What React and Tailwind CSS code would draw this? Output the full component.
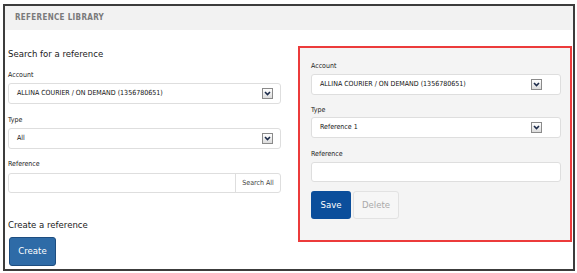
const font = { fontFamily: '"Liberation Sans Narrow", "DejaVu Sans Condensed", "Liberation Sans", sans-serif' };

function Chevron() {
  return (
    <span className="flex items-center justify-center w-[11px] h-[11px] border border-[#8a8a8a] bg-gradient-to-b from-white to-[#dcdcdc]">
      <svg width="7" height="5" viewBox="0 0 7 5">
        <path d="M1 1 L3.5 3.5 L6 1" fill="none" stroke="#1c2b4a" strokeWidth="1.6" />
      </svg>
    </span>
  );
}

function Select({ value, pr = 'pr-[7px]' }) {
  return (
    <div className={`flex items-center justify-between h-[21px] bg-white border border-[#dedede] rounded-[3px] pl-[8px] ${pr}`}>
      <span className="text-[7px] text-[#111]">{value}</span>
      <Chevron />
    </div>
  );
}

function Label({ children }) {
  return <div className="text-[7px] leading-[12px] text-[#222]">{children}</div>;
}

export default function App() {
  return (
    <div className="w-[577px] h-[273px] bg-white pt-[4px] pl-[3px]" style={font}>
      <div className="w-[572px] h-[267px] border-2 border-[#3c3c3c] bg-white">
        <div className="h-[24px] bg-[#f2f2f2] flex items-center pl-[10px]">
          <span className="text-[8px] font-bold tracking-[0.04em] text-[#7a7a7a]">REFERENCE LIBRARY</span>
        </div>

        <div className="flex items-start">
          {/* search column */}
          <div className="w-[273px] ml-[3px] flex flex-col">
            <div className="mt-[16px] text-[9.5px] leading-[16px] text-[#1a1a1a]">Search for a reference</div>
            <div className="mt-[7px]"><Label>Account</Label></div>
            <div className="mt-[2px]"><Select value="ALLINA COURIER / ON DEMAND (1356780651)" /></div>
            <div className="mt-[10px]"><Label>Type</Label></div>
            <div className="mt-[2px]"><Select value="All" /></div>
            <div className="mt-[9px]"><Label>Reference</Label></div>
            <div className="mt-[3px] flex h-[20px] bg-white border border-[#dedede] rounded-[3px]">
              <div className="flex-1" />
              <div className="w-[45px] border-l border-[#dedede] flex items-center justify-center text-[7px] text-[#444]">Search All</div>
            </div>
            <div className="mt-[24px] text-[9.5px] leading-[16px] text-[#1a1a1a]">Create a reference</div>
            <button className="mt-[4px] ml-[1px] w-[47px] h-[29px] rounded-[3px] bg-[#2e6ba7] border border-[#1d4d80] text-white text-[9.5px]">
              Create
            </button>
          </div>

          {/* edit panel */}
          <div className="ml-[17px] mt-[16px] w-[274px] h-[196px] border-2 border-[#ec3b3b] bg-[#f4f4f4] pl-[11px] pr-[9px] flex flex-col">
            <div className="mt-[12px]"><Label>Account</Label></div>
            <div className="mt-[2px]"><Select value="ALLINA COURIER / ON DEMAND (1356780651)" pr="pr-[18px]" /></div>
            <div className="mt-[9px]"><Label>Type</Label></div>
            <div className="mt-[1px]"><Select value="Reference 1" pr="pr-[18px]" /></div>
            <div className="mt-[10px]"><Label>Reference</Label></div>
            <div className="mt-[2px] h-[20px] bg-white border border-[#dedede] rounded-[3px]" />
            <div className="mt-[9px] flex gap-[2px]">
              <button className="w-[40px] h-[28px] rounded-[3px] bg-[#0b4e9b] text-white text-[9.5px]">Save</button>
              <button className="w-[46px] h-[28px] rounded-[3px] bg-[#f6f6f6] border border-[#e2e2e2] text-[#a9a9a9] text-[9.5px]">Delete</button>
            </div>
          </div>
        </div>
      </div>
    </div>
  );
}
